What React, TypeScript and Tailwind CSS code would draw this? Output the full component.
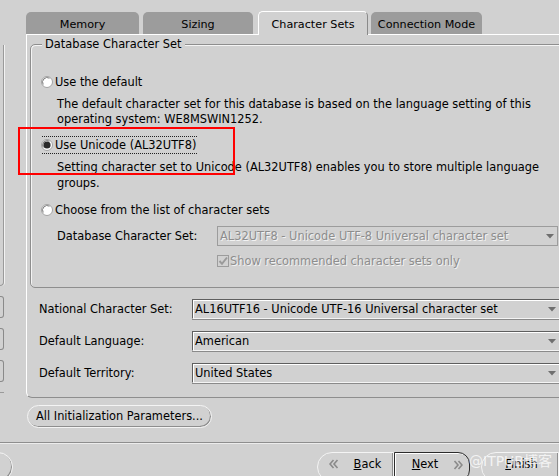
import React from 'react';

// DBCA-style "Character Sets" page (Swing look)

const Radio = ({ checked }: { checked?: boolean }) => (
  <svg width="12" height="12" viewBox="0 0 12 12" className="shrink-0">
    <circle cx="6" cy="6" r="5.5" fill="#ffffff" stroke="#a3a3a3" strokeWidth="1" />
    <path d="M2.2 8.5 A4.6 4.6 0 0 1 8.5 2.2" fill="none" stroke="#7c7c7c" strokeWidth="1" />
    {checked && <circle cx="6" cy="6" r="3.6" fill="#2b2b2b" />}
  </svg>
);

const Arrow = () => (
  <svg width="8" height="5" viewBox="0 0 8 5" className="shrink-0">
    <path d="M0 0 L8 0 L4 4.5 Z" fill="#6f6f6f" />
  </svg>
);

const Combo = ({ text, className = '', disabled }: { text: string; className?: string; disabled?: boolean }) => (
  <div
    className={`flex items-center h-[20px] pl-[2px] pr-[3px] border ${
      disabled
        ? 'border-[#9c9c9c] text-[#8d8d8d] [text-shadow:1px_1px_0_#f2f2f2]'
        : 'border-t-[#5f5f5f] border-l-[#5f5f5f] border-b-[#f4f4f4] border-r-[#f4f4f4] shadow-[inset_1px_1px_0_#ffffff,0_1px_0_#8a8a8a]'
    } ${className}`}
  >
    <span className="flex-1 whitespace-nowrap pt-px">{text}</span>
    <Arrow />
  </div>
);

const Chevrons = ({ dir }: { dir: 'left' | 'right' }) => (
  <svg width="10" height="10" viewBox="0 0 10 10" className="shrink-0">
    {dir === 'left' ? (
      <path d="M4.5 1 L1 5 L4.5 9 M8.5 1 L5 5 L8.5 9" fill="none" stroke="#8a8a8a" strokeWidth="1.6" />
    ) : (
      <path d="M1.5 1 L5 5 L1.5 9 M5.5 1 L9 5 L5.5 9" fill="none" stroke="#8a8a8a" strokeWidth="1.6" />
    )}
  </svg>
);

export default function App() {
  return (
    <div className="relative w-[559px] h-[476px] overflow-hidden bg-[#d1d1d1] text-black text-[11.4px] leading-none font-['DejaVu_Sans',sans-serif]">
      <div className="flex h-[442px]">
        {/* sliver of the step list on the left */}
        <div className="w-[4px] shrink-0 flex flex-col">
          <div className="mt-[45px] h-[241px] border-r border-b border-[#9a9a9a] rounded-br-[4px] shadow-[1px_0_0_#f2f2f2]" />
          <div className="mt-[10px] h-[22px] border-r border-y border-[#8a8a8a] rounded-r-[3px]" />
          <div className="mt-[10px] h-[22px] border-r border-y border-[#8a8a8a] rounded-r-[3px]" />
          <div className="mt-[10px] h-[22px] border-r border-y border-[#8a8a8a] rounded-r-[3px]" />
          <div className="mt-[10px] h-px bg-[#9a9a9a]" />
        </div>

        <div className="ml-[22px] w-[545px] shrink-0 flex flex-col">
          {/* tabs */}
          <div className="relative z-10 mt-[11px] h-[23px] flex items-end text-[11.2px]">
            <div className="w-[113px] h-[22px] pt-[3px] bg-[#9c9c9c] rounded-t-[5px] flex items-center justify-center">Memory</div>
            <div className="ml-[4px] w-[110px] h-[22px] pt-[3px] bg-[#9c9c9c] rounded-t-[5px] flex items-center justify-center">Sizing</div>
            <div className="ml-[5px] w-[110px] h-[24px] pt-[3px] -mb-px bg-[#d1d1d1] border-t border-l border-white border-r border-r-[#8a8a8a] rounded-t-[5px] flex items-center justify-center">
              Character Sets
            </div>
            <div className="ml-[3px] w-[111px] h-[22px] pt-[3px] bg-[#9c9c9c] rounded-t-[5px] flex items-center justify-center">Connection Mode</div>
          </div>

          {/* tab panel */}
          <div className="h-[364px] border-t border-l border-white border-b border-b-[#8e8e8e] rounded-bl-[6px] pl-[3px] flex flex-col">
            <div className="relative mt-[9px] h-[244px] w-[560px] border border-[#8e8e8e] rounded-[5px] shadow-[inset_1px_1px_0_#f4f4f4] flex flex-col">
              <span className="absolute -top-[6px] left-[11px] px-[3px] bg-[#d1d1d1]">Database Character Set</span>

              <div className="mt-[29px] h-[16px] pl-[10px] flex items-center gap-[2px]">
                <Radio />
                <span className="pt-px">Use the default</span>
              </div>
              <div className="mt-[7px] pl-[26px] leading-[15px] whitespace-nowrap">
                <div>The default character set for this database is based on the language setting of this</div>
                <div>operating system: WE8MSWIN1252.</div>
              </div>

              <div className="mt-[10px] h-[16px] pl-[10px] flex items-center gap-[2px]">
                <Radio checked />
                <span className="h-[18px] pt-px flex items-center border-y border-dotted border-[#222] -ml-[13px] pl-[13px] pr-[1px]">Use Unicode (AL32UTF8)</span>
              </div>
              <div className="mt-[7px] pl-[26px] leading-[15.5px] whitespace-nowrap">
                <div>Setting character set to Unicode (AL32UTF8) enables you to store multiple language</div>
                <div>groups.</div>
              </div>

              <div className="mt-[11px] h-[16px] pl-[10px] flex items-center gap-[2px]">
                <Radio />
                <span className="pt-px">Choose from the list of character sets</span>
              </div>

              <div className="mt-[8px] pl-[26px] flex items-center">
                <span className="w-[160px] pt-px">Database Character Set:</span>
                <Combo disabled text="AL32UTF8 - Unicode UTF-8 Universal character set" className="w-[341px]" />
              </div>

              <div className="mt-[7px] h-[16px] pl-[186px] flex items-center gap-[1px] text-[#8d8d8d] [text-shadow:1px_1px_0_#f2f2f2]">
                <svg width="12" height="12" viewBox="0 0 12 12" className="shrink-0">
                  <rect x="0.5" y="0.5" width="11" height="11" fill="#d1d1d1" stroke="#9c9c9c" />
                  <path d="M2.5 6 L5 8.8 L10 2.5" fill="none" stroke="#9a9a9a" strokeWidth="2" />
                </svg>
                <span className="pt-px">Show recommended character sets only</span>
              </div>
            </div>

            <div className="mt-[11px] flex flex-col gap-[12px] pl-[9px]">
              <div className="flex items-center">
                <span className="w-[153px] pt-px">National Character Set:</span>
                <Combo text="AL16UTF16 - Unicode UTF-16 Universal character set" className="w-[368px]" />
              </div>
              <div className="flex items-center">
                <span className="w-[153px] pt-px">Default Language:</span>
                <Combo text="American" className="w-[368px]" />
              </div>
              <div className="flex items-center">
                <span className="w-[153px] pt-px">Default Territory:</span>
                <Combo text="United States" className="w-[368px]" />
              </div>
            </div>
          </div>

          <div className="mt-[7px] ml-[1px] w-[185px] h-[23px] pt-px rounded-full border border-[#f4f4f4] shadow-[inset_-1px_-1px_0_#8e8e8e] flex items-center justify-center">
            All Initialization Parameters...
          </div>
        </div>
      </div>

      {/* separator */}
      <div className="h-px bg-[#8e8e8e]" />
      <div className="h-px bg-[#ececec]" />

      {/* navigation buttons */}
      <div className="mt-[8px] flex items-start">
        <div className="-ml-[22px] w-[36px] h-[30px] rounded-full border border-[#f4f4f4] shadow-[inset_-1px_-1px_0_#8e8e8e]" />
        <div className="ml-[304px] w-[80px] h-[30px] rounded-l-full border border-[#f4f4f4] shadow-[inset_-1px_-1px_0_#8e8e8e] flex items-start pt-[6px] pl-[11px]">
          <Chevrons dir="left" />
          <span className="ml-[15px]"><span className="underline">B</span>ack</span>
        </div>
        <div className="w-[79px] h-[30px] rounded-r-[12px] border border-[#2c2c2c] shadow-[inset_1px_1px_0_#ffffff] flex items-start pt-[6px] pl-[17px]">
          <span><span className="underline">N</span>ext</span>
          <span className="ml-[15px] pt-px"><Chevrons dir="right" /></span>
        </div>
        <div className="ml-[11px] w-[80px] h-[30px] rounded-l-full border border-[#f4f4f4] shadow-[inset_-1px_-1px_0_#8e8e8e] flex items-start pt-[6px] pl-[23px]">
          <span><span className="underline">F</span>inish</span>
        </div>
      </div>

      {/* red highlight */}
      <div className="absolute left-[18px] top-[127px] w-[217px] h-[48px] border-2 border-[#ff0000]" />

      {/* watermark */}
      <div className="absolute left-[469px] top-[454px] text-[14px] text-white/75 font-['DejaVu_Sans','Noto_Sans_CJK_SC',sans-serif]">@ITPUB博客</div>
    </div>
  );
}
